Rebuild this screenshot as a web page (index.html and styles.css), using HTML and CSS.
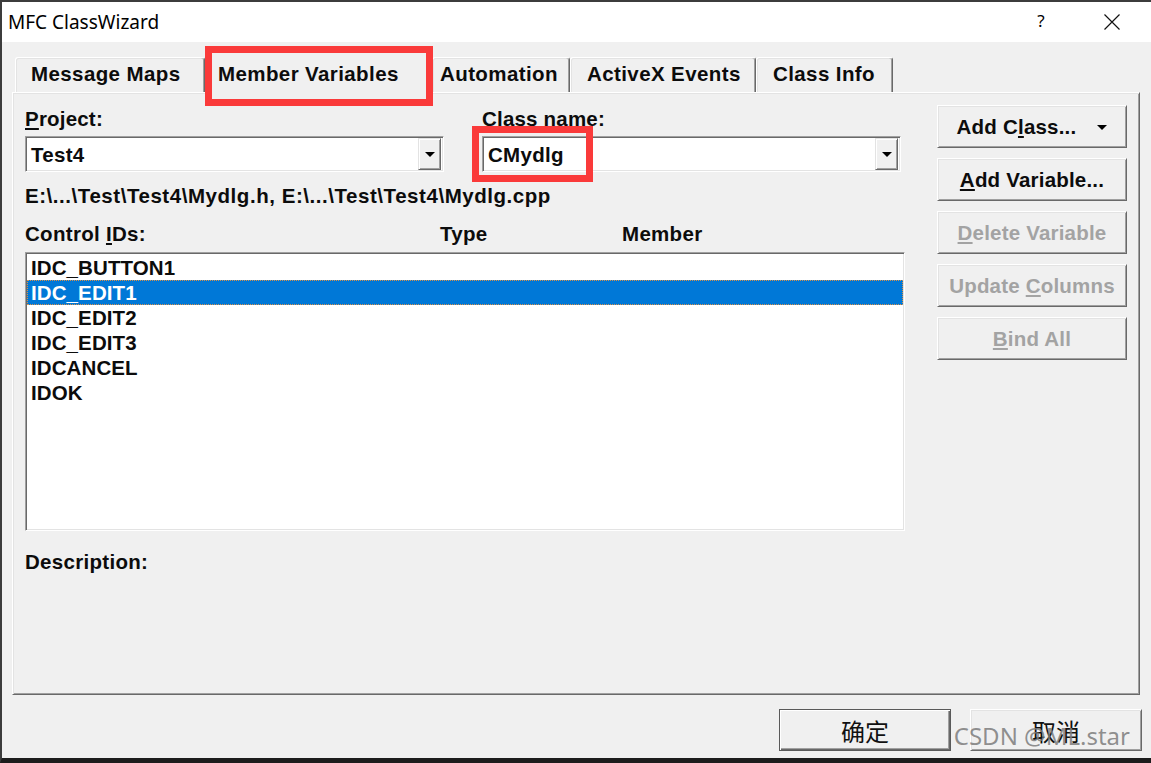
FILE: index.html
```html
<!DOCTYPE html>
<html lang="en">
<head>
<meta charset="utf-8">
<title>MFC ClassWizard</title>
<link rel="stylesheet" href="styles.css">
</head>
<body>
<div class="window">
  <div class="titlebar">
    <span class="title">MFC ClassWizard</span>
    <span class="tbtn tbtn-help">?</span>
    <span class="tbtn tbtn-close">
      <svg width="16" height="16" viewBox="0 0 16 16"><path d="M0.5 0.5 L15.5 15.5 M15.5 0.5 L0.5 15.5" stroke="#111" stroke-width="1.2" fill="none"/></svg>
    </span>
  </div>
  <div class="client">
    <div class="tabs">
      <div class="tab tab-1">Message Maps</div>
      <div class="tab tab-active">Member Variables<span class="mark mark-tab"></span></div>
      <div class="tab tab-3">Automation</div>
      <div class="tab tab-4">ActiveX Events</div>
      <div class="tab tab-5">Class Info</div>
    </div>
    <div class="panel">
      <div class="main-col">
        <div class="combos">
          <div class="field">
            <div class="label"><u>P</u>roject:</div>
            <div class="combo">
              <span class="combo-text">Test4</span>
              <span class="combo-btn"><span class="tri"></span></span>
            </div>
          </div>
          <div class="field">
            <div class="label">Class <u>n</u>ame:</div>
            <div class="combo combo-marked">
              <span class="combo-text">CMydlg</span>
              <span class="combo-btn"><span class="tri"></span></span>
              <span class="mark mark-class"></span>
            </div>
          </div>
        </div>
        <div class="path">E:\...\Test\Test4\Mydlg.h, E:\...\Test\Test4\Mydlg.cpp</div>
        <div class="list-head">
          <span>Control <u>I</u>Ds:</span>
          <span>Type</span>
          <span>Member</span>
        </div>
        <div class="list">
          <div class="row">IDC_BUTTON1</div>
          <div class="row row-sel">IDC_EDIT1</div>
          <div class="row">IDC_EDIT2</div>
          <div class="row">IDC_EDIT3</div>
          <div class="row">IDCANCEL</div>
          <div class="row">IDOK</div>
        </div>
        <div class="desc">Description:</div>
      </div>
      <div class="side-col">
        <div class="btn btn-split"><span>Add C<u>l</u>ass...</span><span class="tri"></span></div>
        <div class="btn"><span><u>A</u>dd Variable...</span></div>
        <div class="btn btn-disabled"><span><u>D</u>elete Variable</span></div>
        <div class="btn btn-disabled"><span>Update <u>C</u>olumns</span></div>
        <div class="btn btn-disabled"><span><u>B</u>ind All</span></div>
      </div>
    </div>
    <div class="footer">
      <div class="fbtn fbtn-default">确定</div>
      <div class="fbtn">取消</div>
      <span class="watermark">CSDN @ML.star</span>
    </div>
  </div>
</div>
</body>
</html>
```
FILE: styles.css
```css
* {
  box-sizing: border-box;
  margin: 0;
  padding: 0;
}

html, body {
  width: 1151px;
  height: 763px;
  overflow: hidden;
  background: #f0f0f0;
}

body {
  font-family: "Liberation Sans", Arial, sans-serif;
  font-weight: bold;
  font-size: 20.5px;
  color: #0c0c0c;
}

u {
  text-decoration: underline;
  text-underline-offset: 2px;
}

.window {
  width: 1151px;
  height: 763px;
  border-top: 2px solid #3c3c3c;
  border-left: 2px solid #3c3c3c;
  border-bottom: 5px solid #1c1c1c;
  display: flex;
  flex-direction: column;
  background: #f0f0f0;
}

/* ---------- title bar ---------- */
.titlebar {
  height: 40px;
  flex: none;
  background: #ffffff;
  display: flex;
  align-items: center;
  font-family: "Noto Sans", "Liberation Sans", sans-serif;
  font-weight: normal;
  font-size: 19px;
  color: #000;
}

.title {
  flex: 1;
  padding-left: 6px;
  padding-bottom: 1px;
}

.tbtn {
  width: 70px;
  height: 40px;
  display: flex;
  align-items: center;
  justify-content: center;
}

.tbtn-help {
  font-size: 17px;
  padding-bottom: 3px;
}

.tbtn-close {
  width: 72px;
  margin-right: 3px;
}

/* ---------- client ---------- */
.client {
  flex: 1;
  display: flex;
  flex-direction: column;
  padding: 0 11px 7px 10px;
}

/* ---------- tabs ---------- */
.tabs {
  height: 50px;
  flex: none;
  display: flex;
  align-items: flex-end;
  padding-left: 3px;
  position: relative;
  z-index: 2;
}

.tab {
  height: 35px;
  display: flex;
  align-items: center;
  justify-content: flex-start;
  padding-bottom: 3px;
  letter-spacing: 0.4px;
  border-top: 1px solid #ffffff;
  border-left: 1px solid #ffffff;
  border-right: 1px solid #696969;
  box-shadow: inset -1px 0 0 #a0a0a0, inset 1px 1px 0 #e3e3e3;
  border-radius: 3px 3px 0 0;
  background: #f0f0f0;
  white-space: nowrap;
}

.tab-1 { width: 190px; padding-left: 15px; }
.tab-3 { width: 138px; padding-left: 7px; }
.tab-4 { width: 186px; padding-left: 16px; }
.tab-5 { width: 137px; padding-left: 16px; }

.tab-active {
  width: 227px;
  height: 46px;
  margin-bottom: -2px;
  padding-top: 9px;
  padding-bottom: 5px;
  padding-left: 12px;
  position: relative;
}

/* red annotation boxes */
.mark {
  position: absolute;
  border: 7px solid #fa3a3a;
  pointer-events: none;
}

.mark-tab {
  left: -1px;
  right: -2px;
  top: -3px;
  bottom: -12px;
}

/* ---------- panel ---------- */
.panel {
  height: 603px;
  flex: none;
  display: flex;
  gap: 32px;
  padding: 12px 10px 0 12px;
  border-top: 1px solid #ffffff;
  border-left: 1px solid #ffffff;
  border-right: 1px solid #696969;
  border-bottom: 1px solid #696969;
  box-shadow: inset 1px 1px 0 #e3e3e3, inset -1px -1px 0 #a0a0a0;
  position: relative;
  z-index: 1;
}

.main-col {
  width: 880px;
  display: flex;
  flex-direction: column;
}

.combos {
  display: grid;
  grid-template-columns: 419px 419px;
  column-gap: 38px;
}

.label {
  height: 28px;
  line-height: 28px;
  margin-bottom: 3px;
  white-space: nowrap;
  letter-spacing: 0.2px;
}

.combo {
  height: 36px;
  display: flex;
  align-items: center;
  background: #ffffff;
  border-top: 1px solid #a0a0a0;
  border-left: 1px solid #a0a0a0;
  border-right: 1px solid #ffffff;
  border-bottom: 1px solid #ffffff;
  box-shadow: inset 1px 1px 0 #696969, inset -1px -1px 0 #e3e3e3;
  padding: 1px 1px 1px 5px;
  position: relative;
}

.combo-text {
  flex: 1;
  line-height: 32px;
  padding-top: 2px;
  letter-spacing: 0.3px;
}

.combo-btn {
  width: 23px;
  height: 32px;
  margin-right: 1px;
  display: flex;
  align-items: center;
  justify-content: center;
  background: #f0f0f0;
  border-top: 1px solid #e3e3e3;
  border-left: 1px solid #e3e3e3;
  border-right: 1px solid #696969;
  border-bottom: 1px solid #696969;
  box-shadow: inset 1px 1px 0 #ffffff, inset -1px -1px 0 #a0a0a0;
}

.tri {
  width: 0;
  height: 0;
  border-left: 5px solid transparent;
  border-right: 5px solid transparent;
  border-top: 5px solid #000;
}

.mark-class {
  left: -11px;
  top: -11px;
  width: 121px;
  bottom: -11px;
}

.path {
  margin-top: 10px;
  height: 28px;
  line-height: 28px;
  white-space: nowrap;
  letter-spacing: 0.55px;
}

.list-head {
  margin-top: 10px;
  height: 28px;
  line-height: 28px;
  display: grid;
  grid-template-columns: 415px 182px 1fr;
  margin-bottom: 4px;
  letter-spacing: 0.3px;
}

.list {
  height: 279px;
  background: #ffffff;
  border-top: 1px solid #a0a0a0;
  border-left: 1px solid #a0a0a0;
  border-right: 1px solid #ffffff;
  border-bottom: 1px solid #ffffff;
  box-shadow: inset 1px 1px 0 #696969, inset -1px -1px 0 #e3e3e3;
  padding: 2px 1px 1px 1px;
}

.row {
  height: 25px;
  line-height: 25px;
  padding-left: 4px;
  white-space: nowrap;
  letter-spacing: 0.1px;
}

.row-sel {
  background: #0078d7;
  color: #ffffff;
  outline: 1px dotted #d8914a;
  outline-offset: -1px;
}

.desc {
  margin-top: 17px;
  height: 28px;
  line-height: 28px;
  letter-spacing: 0.3px;
}

/* ---------- side buttons ---------- */
.side-col {
  width: 190px;
  display: flex;
  flex-direction: column;
  gap: 10px;
}

.btn {
  height: 43px;
  display: flex;
  align-items: center;
  justify-content: center;
  background: #f0f0f0;
  border-top: 1px solid #ffffff;
  border-left: 1px solid #ffffff;
  border-right: 1px solid #696969;
  border-bottom: 1px solid #696969;
  box-shadow: inset 1px 1px 0 #e3e3e3, inset -1px -1px 0 #a0a0a0;
  white-space: nowrap;
  letter-spacing: 0.2px;
}

.btn-split {
  gap: 21px;
}

.btn-split .tri {
  margin-top: 1px;
}

.btn-disabled {
  color: #a3a3a3;
}

/* ---------- footer ---------- */
.footer {
  flex: 1;
  display: flex;
  justify-content: flex-end;
  align-items: flex-start;
  gap: 19px;
  padding-top: 14px;
  margin-right: -2px;
  position: relative;
}

.fbtn {
  width: 172px;
  height: 42px;
  display: flex;
  align-items: center;
  justify-content: center;
  font-family: "Noto Sans CJK SC", "Noto Sans", sans-serif;
  font-weight: normal;
  font-size: 24px;
  color: #111;
  background: #f0f0f0;
  border-top: 1px solid #ffffff;
  border-left: 1px solid #ffffff;
  border-right: 1px solid #696969;
  border-bottom: 1px solid #696969;
  box-shadow: inset 1px 1px 0 #e3e3e3, inset -1px -1px 0 #a0a0a0;
}

.fbtn-default {
  border: 1px solid #5a5a5a;
  box-shadow: inset 1px 1px 0 #ffffff, inset -1px -1px 0 #696969, inset -2px -2px 0 #a0a0a0;
}

.watermark {
  position: absolute;
  right: 12px;
  top: 29px;
  font-family: "Noto Sans", "Liberation Sans", sans-serif;
  font-weight: normal;
  font-size: 24px;
  line-height: 24px;
  color: rgba(125, 125, 125, 0.85);
  white-space: nowrap;
}
```
